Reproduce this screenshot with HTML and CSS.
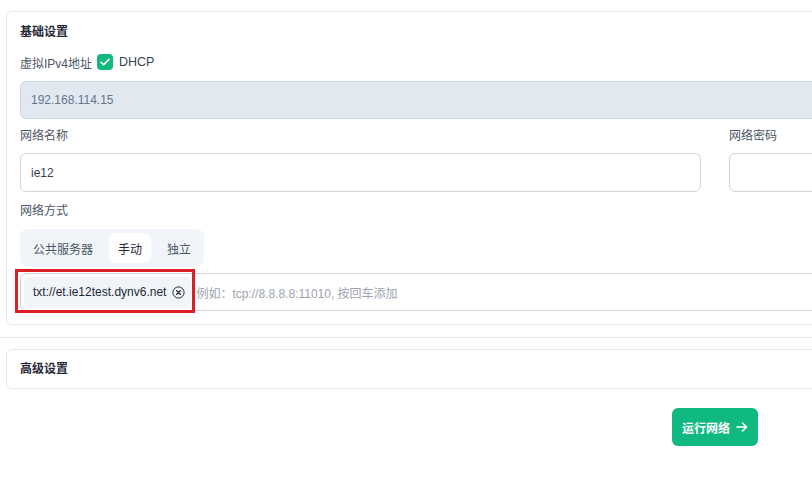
FILE: index.html
```html
<!DOCTYPE html>
<html lang="zh">
<head>
<meta charset="utf-8">
<link rel="stylesheet" href="styles.css">
</head>
<body>
<div class="page">
  <section class="card">
    <div class="card-title">基础设置</div>
    <div class="field-row">
      <span class="label">虚拟IPv4地址</span>
      <span class="checkbox"><svg viewBox="0 0 16 16" width="16" height="16"><path d="M4 8.2l2.6 2.6L12 5.4" fill="none" stroke="#fff" stroke-width="1.6" stroke-linecap="round" stroke-linejoin="round"/></svg></span>
      <span class="check-label">DHCP</span>
    </div>
    <div class="input disabled">192.168.114.15</div>
    <div class="two-col">
      <div class="col">
        <div class="label-line">网络名称</div>
        <div class="input">ie12</div>
      </div>
      <div class="col">
        <div class="label-line">网络密码</div>
        <div class="input"></div>
      </div>
    </div>
    <div class="label-line mode-label">网络方式</div>
    <div class="segmented">
      <span class="seg">公共服务器</span>
      <span class="seg active">手动</span>
      <span class="seg">独立</span>
    </div>
    <div class="chips-input">
      <span class="chip">txt://et.ie12test.dynv6.net<svg class="chip-x" viewBox="0 0 13 13" width="13" height="13"><circle cx="6.5" cy="6.5" r="5.6" fill="none" stroke="#1f2937" stroke-width="1"/><path d="M4.5 4.5l4 4M8.5 4.5l-4 4" stroke="#1f2937" stroke-width="1.1" stroke-linecap="round"/></svg><span class="annot"></span></span>
      <span class="placeholder">例如：tcp://8.8.8.8:11010, 按回车添加</span>
    </div>
  </section>
  <hr class="divider">
  <section class="card card-collapsed">
    <div class="card-title">高级设置</div>
  </section>
  <div class="actions">
    <button class="run-btn">运行网络<svg viewBox="0 0 14 14" width="14" height="14"><path d="M2 7h9.5M7.5 3l4 4-4 4" fill="none" stroke="#fff" stroke-width="1.6" stroke-linecap="round" stroke-linejoin="round"/></svg></button>
  </div>
</div>
</body>
</html>
```
FILE: styles.css
```css
html, body {
  margin: 0;
  padding: 0;
  overflow: hidden;
  background: #ffffff;
}
body {
  font-family: "Liberation Sans", Arial, "Noto Sans CJK SC", sans-serif;
  font-size: 12px;
  color: #374151;
}
.page {
  width: 1430px;
  padding-top: 11px;
}
.card {
  margin: 0 6px;
  border: 1px solid #e5e7eb;
  border-radius: 6px;
  padding: 11px 13px 13px;
  background: #fff;
}
.card-title {
  font-weight: bold;
  color: #1f2937;
  line-height: 18px;
  height: 18px;
}
.field-row {
  display: flex;
  align-items: center;
  height: 20px;
  margin-top: 11px;
}
.label {
  color: #4b5563;
}
.checkbox {
  width: 16px;
  height: 16px;
  border-radius: 4px;
  background: #10b981;
  margin-left: 5px;
  display: flex;
}
.check-label {
  margin-left: 6px;
  color: #374151;
  font-size: 12.5px;
}
.input {
  box-sizing: border-box;
  height: 38px;
  border: 1px solid #d1d5db;
  border-radius: 6px;
  padding: 0 10px;
  display: flex;
  align-items: center;
  color: #374151;
  background: #fff;
}
.input.disabled {
  margin-top: 9px;
  background: #e2e8f0;
  border-color: #cbd5e1;
  color: #64748b;
}
.two-col {
  display: grid;
  grid-template-columns: 1fr 1fr;
  column-gap: 28px;
  margin-top: 7px;
}
.two-col .label-line {
  margin-bottom: 7px;
}
.two-col .input {
  height: 39px;
}
.label-line {
  color: #4b5563;
  line-height: 20px;
  height: 20px;
  margin-bottom: 8px;
}
.mode-label {
  margin-top: 9px;
}
.segmented {
  display: inline-flex;
  gap: 7px;
  padding: 4px;
  background: #f1f5f9;
  border-radius: 8px;
  height: 38px;
  box-sizing: border-box;
}
.seg {
  display: flex;
  align-items: center;
  padding: 0 9px;
  color: #4b5563;
  border-radius: 6px;
}
.seg.active {
  background: #fff;
  color: #1f2937;
}
.chips-input {
  box-sizing: border-box;
  margin-top: 6px;
  height: 38px;
  border: 1px solid #d1d5db;
  border-radius: 6px;
  padding: 3px;
  display: flex;
  align-items: center;
}
.chip {
  position: relative;
  box-sizing: border-box;
  height: 30px;
  display: flex;
  align-items: center;
  background: #f1f5f9;
  border-radius: 5px;
  padding: 0 6px 0 9px;
  color: #1f2937;
  font-size: 12px;
}
.chip-x {
  margin-left: 6px;
}
.annot {
  position: absolute;
  left: -9px;
  top: -8px;
  right: -4px;
  bottom: -6px;
  border: 3px solid #dc1f26;
  pointer-events: none;
}
.placeholder {
  margin-left: 5px;
  color: #9ca3af;
}
.divider {
  border: 0;
  border-top: 1px solid #e5e7eb;
  margin: 12px 0 11px;
  height: 0;
}
.card-collapsed {
  padding: 10px 13px 10px;
}
.actions {
  display: flex;
  justify-content: center;
  margin-top: 19px;
}
.run-btn {
  font-family: inherit;
  font-size: 12px;
  font-weight: bold;
  color: #fff;
  background: #10b981;
  border: 0;
  border-radius: 6px;
  height: 38px;
  padding: 0 9px 0 10px;
  display: flex;
  align-items: center;
  gap: 5px;
}
```
